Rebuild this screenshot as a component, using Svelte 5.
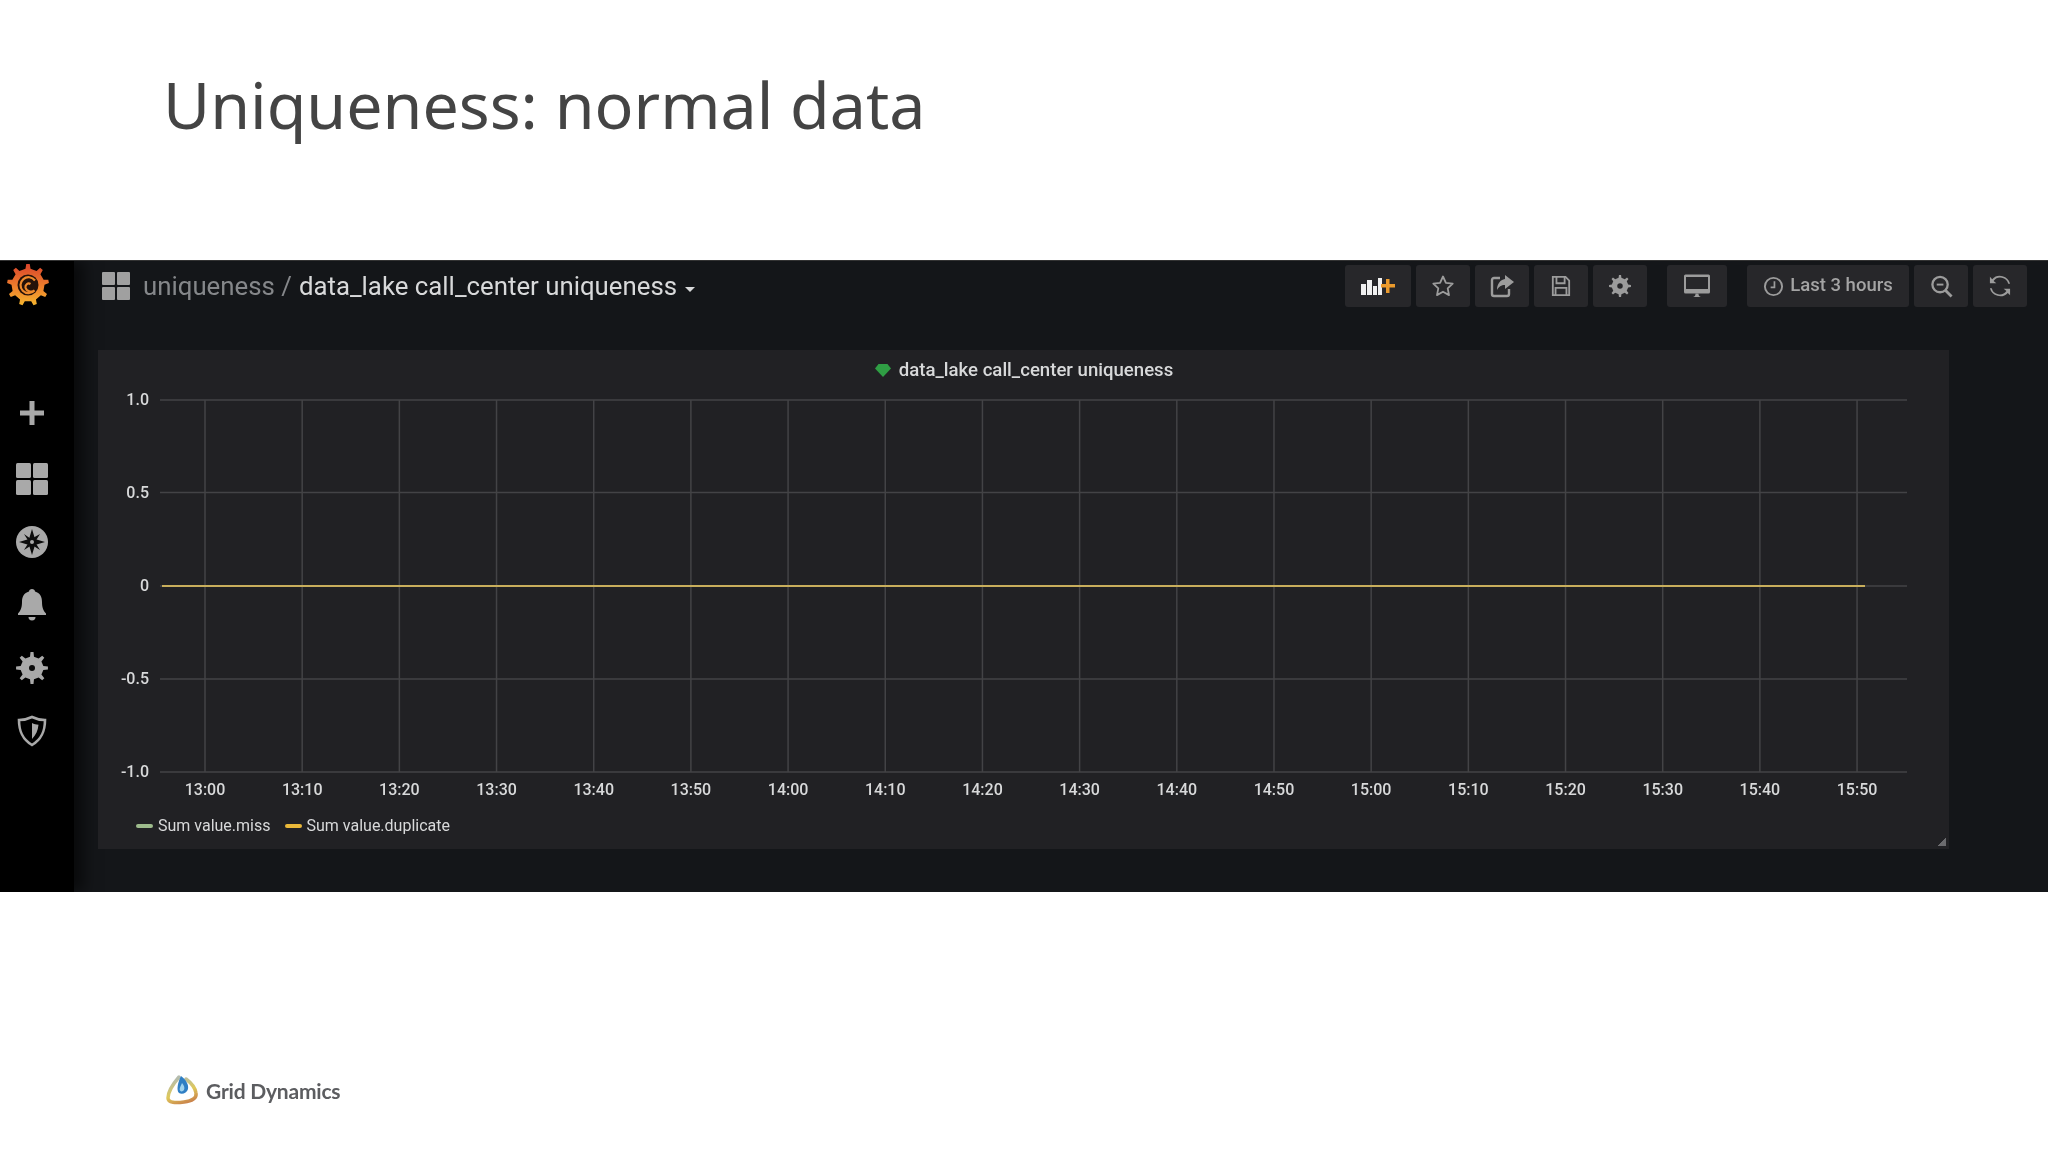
<script>
  const times = ["13:00","13:10","13:20","13:30","13:40","13:50","14:00","14:10","14:20","14:30","14:40","14:50","15:00","15:10","15:20","15:30","15:40","15:50"];
  const ticks = [
    { label: "1.0", y: 400 },
    { label: "0.5", y: 492.5 },
    { label: "0", y: 586 },
    { label: "-0.5", y: 679 },
    { label: "-1.0", y: 772 }
  ];
  // page x of the first tick and spacing, minus panel left edge
  const panelLeft = 98;
  const plotTop = 390;
  const xFor = (i) => 205 + i * 97.18 - panelLeft;
  const yFor = (y) => y - plotTop;

  // toothed wheel used by the gear icons and the logo
  function gear(cx, cy, outer, inner, teeth) {
    const pts = [];
    const step = (Math.PI * 2) / teeth;
    for (let i = 0; i < teeth; i++) {
      const a = i * step - Math.PI / 2;
      const w = step * 0.2;
      pts.push([a - w * 1.1, inner], [a - w * 0.6, outer], [a + w * 0.6, outer], [a + w * 1.1, inner]);
    }
    return pts
      .map(([a, r]) => `${(cx + Math.cos(a) * r).toFixed(2)},${(cy + Math.sin(a) * r).toFixed(2)}`)
      .join(" ");
  }
</script>

<div class="slide">
  <h1>Uniqueness: normal data</h1>

  <section class="dash">
    <nav class="side">
      <svg class="logo" viewBox="0 0 44 46" width="44" height="46">
        <defs>
          <linearGradient id="gf" x1="0" y1="0" x2="0" y2="1">
            <stop offset="0" stop-color="#d9452c" />
            <stop offset="0.55" stop-color="#ee7f2c" />
            <stop offset="1" stop-color="#f5b52e" />
          </linearGradient>
        </defs>
        <polygon points={gear(22, 24, 21, 16.500, 9)} fill="url(#gf)" />
        <circle cx="22" cy="24" r="10.500" fill="#24120a" />
        <path d="M29 19.500A8 8 0 1 0 28.500 29.500C25.500 31.500 20.500 30.500 19.500 26.500C19 23.500 22 21.500 24.500 23" fill="none" stroke="#ee8a2c" stroke-width="2.200" />
      </svg>
      <div class="side-icons">
        <svg class="plus" viewBox="0 0 26 26" width="26" height="26"><path d="M10.500 1h5v9.500H25v5h-9.500V25h-5v-9.500H1v-5h9.500z" fill="#a9a9a9" /></svg>
        <svg viewBox="0 0 32 32" width="32" height="32"><g fill="#a9a9a9"><rect x="0" y="0" width="15" height="15" rx="1.500" /><rect x="17" y="0" width="15" height="15" rx="1.500" /><rect x="0" y="17" width="15" height="15" rx="1.500" /><rect x="17" y="17" width="15" height="15" rx="1.500" /></g></svg>
        <svg viewBox="0 0 32 32" width="32" height="32"><circle cx="16" cy="16" r="16" fill="#a9a9a9" /><path d="M16 3l3 10 10 3-10 3-3 10-3-10-10-3 10-3z" fill="#0c0c0c" /><path d="M8 8l7 5 9-5-5 8 5 8-8-5-8 5 5-8z" fill="#0c0c0c" /><circle cx="16" cy="16" r="2" fill="#a9a9a9" /></svg>
        <svg viewBox="0 0 28 32" width="28" height="32"><path d="M14 0c1.600 0 3 1.100 3 2.600C22 4 24 8 24 13c0 6 1.500 9 4 11.500V26H0v-1.500C2.500 22 4 19 4 13c0-5 2-9 7-10.400C11 1.100 12.400 0 14 0z" fill="#a9a9a9" /><path d="M10.500 28h7a3.500 3.500 0 0 1-7 0z" fill="#a9a9a9" /></svg>
        <svg viewBox="0 0 32 32" width="32" height="32"><polygon points={gear(16, 16, 16, 11.500, 8)} fill="#a9a9a9" /><circle cx="16" cy="16" r="10.500" fill="#a9a9a9" /><circle cx="16" cy="16" r="3" fill="#0c0c0c" /></svg>
        <svg viewBox="0 0 30 32" width="30" height="32"><path d="M15 2c4 2 8 3 13 3 0 11-3 19-13 25C5 24 2 16 2 5c5 0 9-1 13-3z" fill="none" stroke="#a9a9a9" stroke-width="2.600" /><path d="M15 8c2 1 4 1.500 6.500 1.700C21 15 19 20 15 24z" fill="#a9a9a9" /></svg>
      </div>
    </nav>

    <div class="main">
      <header class="topbar">
        <div class="crumbs">
          <svg viewBox="0 0 28 28" width="28" height="28"><g fill="#a0a0a0"><rect x="0" y="0" width="13" height="13" rx="1" /><rect x="15" y="0" width="13" height="13" rx="1" /><rect x="0" y="15" width="13" height="13" rx="1" /><rect x="15" y="15" width="13" height="13" rx="1" /></g></svg>
          <span class="crumb-dim">uniqueness /</span>
          <span class="crumb-main">data_lake call_center uniqueness</span>
          <i class="caret"></i>
        </div>

        <div class="tools">
          <div class="group first">
            <button class="tool wide">
              <svg viewBox="0 0 36 20" width="36" height="20">
                <g fill="#f0f0f0"><rect x="1" y="8" width="5" height="11" /><rect x="7" y="4" width="5" height="15" /><rect x="13" y="10" width="4" height="9" /><rect x="18" y="2" width="4" height="17" /></g>
                <path d="M26 3h3.500v5H35v3.500h-5.500V17H26v-5.500h-5V8h5z" fill="#eb9a2c" />
              </svg>
            </button>
            <button class="tool">
              <svg viewBox="0 0 24 24" width="24" height="24"><path d="M12 2.500l2.900 6.300 6.800.8-5 4.700 1.300 6.800-6-3.400-6 3.400 1.300-6.800-5-4.700 6.800-.8z" fill="none" stroke="#9c9c9c" stroke-width="1.800" stroke-linejoin="round" /></svg>
            </button>
            <button class="tool">
              <svg viewBox="0 0 26 24" width="26" height="24"><path d="M11 4H5a2 2 0 0 0-2 2v14a2 2 0 0 0 2 2h13a2 2 0 0 0 2-2v-5" fill="none" stroke="#9c9c9c" stroke-width="2.400" /><path d="M16 1l9 7-9 7v-4c-4 0-6 1.500-8 5 0-6 3-10 8-11z" fill="#9c9c9c" /></svg>
            </button>
            <button class="tool">
              <svg viewBox="0 0 22 24" width="20" height="22"><path d="M2 2h14l4 4v16H2z" fill="none" stroke="#9c9c9c" stroke-width="2" /><path d="M6 2v7h9V2M5 22v-8h12v8" fill="none" stroke="#9c9c9c" stroke-width="2" /></svg>
            </button>
            <button class="tool">
              <svg viewBox="0 0 24 24" width="22" height="22"><polygon points={gear(12, 12, 12, 9, 8)} fill="#9c9c9c" /><circle cx="12" cy="12" r="8" fill="#9c9c9c" /><circle cx="12" cy="12" r="3" fill="#27272a" /></svg>
            </button>
          </div>
          <button class="tool monitor">
            <svg viewBox="0 0 28 24" width="28" height="24"><path d="M1 2a1.500 1.500 0 0 1 1.500-1.500h23A1.500 1.500 0 0 1 27 2v16a1.500 1.500 0 0 1-1.500 1.500h-23A1.500 1.500 0 0 1 1 18z" fill="#9c9c9c" /><rect x="3" y="3" width="22" height="12" fill="#27272a" /><path d="M10 23c2-.5 2.500-1.500 2.500-3.500h3c0 2 .5 3 2.500 3.500z" fill="#9c9c9c" /></svg>
          </button>
          <div class="group">
            <button class="tool time">
              <svg viewBox="0 0 22 22" width="21" height="21"><circle cx="11" cy="11" r="9" fill="none" stroke="#9c9c9c" stroke-width="2" /><path d="M12 5.500V12H8" fill="none" stroke="#9c9c9c" stroke-width="1.800" /></svg>
              <span>Last 3 hours</span>
            </button>
            <button class="tool">
              <svg viewBox="0 0 24 24" width="23" height="23"><circle cx="10.500" cy="10" r="8" fill="none" stroke="#9c9c9c" stroke-width="2.400" /><path d="M16 16l6.500 6.500" stroke="#9c9c9c" stroke-width="3" /><path d="M7 10h7" stroke="#9c9c9c" stroke-width="2" /></svg>
            </button>
            <button class="tool">
              <svg viewBox="0 0 24 24" width="22" height="22"><path d="M21 9.500A9 9 0 0 0 5 6.500L8 9H1V2l2.500 2.500A11.500 11.500 0 0 1 23 9.500zM3 14.500A9 9 0 0 0 19 17.500L16 15h7v7l-2.500-2.500A11.500 11.500 0 0 1 1 14.500z" fill="#9c9c9c" /></svg>
            </button>
          </div>
        </div>
      </header>

      <article class="panel">
        <div class="panel-title">
          <svg viewBox="0 0 18 16" width="18" height="16"><path d="M9 15L1 6.500 4.500 2h9L17 6.500z" fill="#2f9e44" /></svg>
          <span>data_lake call_center uniqueness</span>
        </div>

        <svg class="plot" viewBox="0 0 1851 410" width="1851" height="410">
          {#each times as t, i}
            <line x1={xFor(i)} x2={xFor(i)} y1={yFor(400)} y2={yFor(772)} class="grid" />
            <text x={xFor(i)} y="405" text-anchor="middle" class="axis">{t}</text>
          {/each}
          {#each ticks as tick}
            <line x1="62" x2="1809" y1={yFor(tick.y)} y2={yFor(tick.y)} class="grid" />
            <text x="51" y={yFor(tick.y) + 5} text-anchor="end" class="axis">{tick.label}</text>
          {/each}
          <line x1="64" x2="1767" y1={yFor(586)} y2={yFor(586)} class="series" />
        </svg>

        <div class="legend">
          <span class="item"><i class="dash green"></i>Sum value.miss</span>
          <span class="item"><i class="dash yellow"></i>Sum value.duplicate</span>
        </div>

        <i class="resize"></i>
      </article>
    </div>
  </section>

  <footer class="brand">
    <svg viewBox="0 0 34 34" width="34" height="34">
      <defs>
        <linearGradient id="ring" x1="0.4" y1="0" x2="0.8" y2="1">
          <stop offset="0" stop-color="#b4bcae" />
          <stop offset="0.55" stop-color="#dfc95a" />
          <stop offset="1" stop-color="#c9804a" />
        </linearGradient>
      </defs>
      <path d="M14 4C8 11 3 19 3 25c0 5 8 5 16 4 8-1 13-4 12-9C30 14 25 9 21 6" fill="none" stroke="url(#ring)" stroke-width="3.500" stroke-linecap="round" />
      <path d="M16 3c4 3 8 8 7 13-1 4-6 6-9 4-3-3-1-11 2-17z" fill="#2f7fc4" />
      <path d="M17 10c2 2 3 5 2 7-1 1.500-3 2-4 .5-1-2 1-5 2-7.500z" fill="#9fd3ee" />
    </svg>
    <span>Grid Dynamics</span>
  </footer>
</div>

<style>
  :global(body) {
    margin: 0;
    background: #fff;
  }

  .slide {
    width: 2048px;
    height: 1152px;
    display: flex;
    flex-direction: column;
    overflow: hidden;
    background: #fff;
  }

  h1 {
    margin: 0;
    height: 260px;
    box-sizing: border-box;
    padding: 59px 0 0 163px;
    font-family: "Noto Sans", sans-serif;
    font-weight: 400;
    font-size: 64.5px;
    line-height: 90px;
    color: #444;
  }

  .dash {
    height: 632px;
    display: flex;
    overflow: hidden;
    background: #141619;
    border-top: 1px solid #333;
    box-sizing: border-box;
  }

  .side,
  .main {
    filter: blur(0.5px);
  }

  .side {
    width: 74px;
    flex: none;
    background: #000;
    box-shadow: 10px 0 14px rgba(0, 0, 0, 0.55);
    display: flex;
    flex-direction: column;
    position: relative;
  }

  .logo {
    margin: 0 0 0 6px;
  }

  .side-icons {
    margin-top: 93px;
    padding-right: 10px;
    display: flex;
    flex-direction: column;
    align-items: center;
    gap: 31px;
  }

  .plus {
    margin-bottom: 6px;
  }

  .main {
    flex: 1;
    min-width: 0;
    padding-left: 24px;
  }

  .topbar {
    height: 89px;
    display: flex;
    justify-content: space-between;
    align-items: flex-start;
  }

  .crumbs {
    display: flex;
    align-items: center;
    height: 50px;
    padding-left: 4px;
    font-family: Roboto, sans-serif;
    font-size: 25.800px;
    white-space: pre;
  }

  .crumb-dim {
    margin-left: 13px;
    color: #85878a;
  }

  .crumb-main {
    margin-left: 7px;
    color: #d8d9da;
  }

  .caret {
    margin: 6px 0 0 8px;
    border: 5px solid transparent;
    border-top-color: #d8d9da;
    border-bottom: 0;
  }

  .tools {
    display: flex;
    gap: 20px;
    padding: 4px 21px 0 0;
  }

  .group {
    display: flex;
    gap: 5px;
  }

  .group.first {
    margin-right: 0;
  }

  .tool {
    height: 42px;
    width: 54px;
    padding: 0;
    border: 0;
    border-radius: 3px;
    background: #27272a;
    display: flex;
    align-items: center;
    justify-content: center;
    color: #a4a4a4;
    font-family: Roboto, sans-serif;
    font-weight: 500;
    font-size: 18.500px;
  }

  .tool.wide {
    width: 66px;
  }

  .tool.monitor {
    width: 60px;
  }

  .tool.time {
    width: 162px;
    gap: 6px;
  }

  .tool.time span {
    margin-top: -3px;
  }

  .panel {
    position: relative;
    width: 1851px;
    height: 499px;
    background: #212124;
  }

  .panel-title {
    height: 40px;
    display: flex;
    align-items: center;
    justify-content: center;
    gap: 7px;
    font-family: Roboto, sans-serif;
    font-weight: 500;
    font-size: 18.600px;
    color: #d8d9da;
  }

  .plot {
    display: block;
  }

  .grid {
    stroke: #434346;
    stroke-width: 1.500;
  }

  .series {
    stroke: #c8ae5c;
    stroke-width: 2;
  }

  .axis {
    font-family: Roboto, sans-serif;
    font-weight: 500;
    font-size: 16px;
    fill: #d8d9da;
  }

  .legend {
    display: flex;
    gap: 14px;
    padding: 16px 0 0 38px;
    font-family: Roboto, sans-serif;
    font-size: 16px;
    color: #d8d9da;
  }

  .item {
    display: flex;
    align-items: center;
    gap: 5px;
  }

  .legend .dash {
    width: 17px;
    height: 4px;
    border: 0;
    border-radius: 2px;
  }

  .green {
    background: #9dbb8c;
  }

  .yellow {
    background: #eab839;
  }

  .resize {
    position: absolute;
    right: 3px;
    bottom: 3px;
    width: 8px;
    height: 8px;
    background: linear-gradient(135deg, transparent 50%, #6b6b6e 50%);
  }

  .brand {
    display: flex;
    align-items: center;
    gap: 7px;
    margin: 181px 0 0 165px;
    font-family: Lato, sans-serif;
    font-weight: 700;
    font-size: 21px;
    letter-spacing: -0.2px;
    color: #5c5d60;
    filter: blur(0.5px);
  }
</style>
